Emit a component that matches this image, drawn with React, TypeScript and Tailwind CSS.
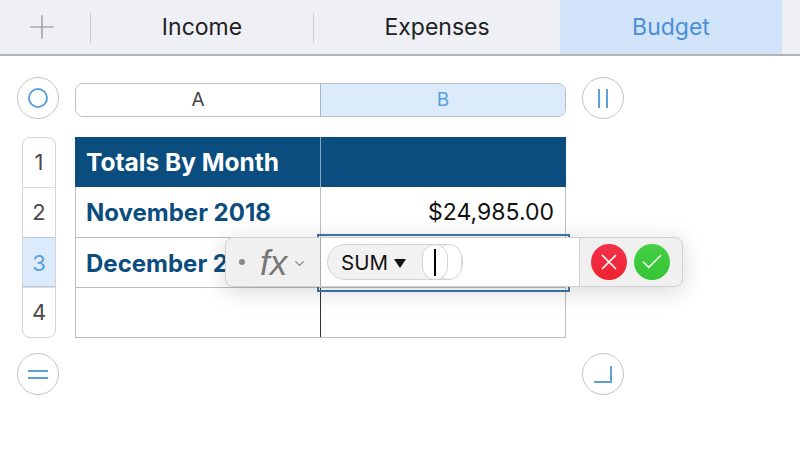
import { Check, ChevronDown, Plus, X } from "lucide-react";

const font = "font-['Inter','Liberation_Sans',sans-serif]";

function RoundButton({ children }: { children: React.ReactNode }) {
  return (
    <div className="flex h-[42px] w-[42px] shrink-0 items-center justify-center rounded-full border border-[#c4c4c4] bg-white">
      {children}
    </div>
  );
}

const rowNumbers = ["1", "2", "3", "4"];

export default function App() {
  return (
    <div className={`${font} h-[464px] w-[800px] overflow-hidden bg-white`}>
      <header className="flex h-[56px] border-b-2 border-[#b3b3b8] bg-[#eef0f5] text-[23px] text-[#222]">
        <div className="flex w-[91px] items-center justify-end">
          <div className="mt-[2px] flex h-[30px] w-[62px] items-center border-r border-[#c9cacd]">
            <Plus className="ml-[-6px] mt-[-2px] shrink-0 text-[#a9a9a9]" size={38} strokeWidth={1.1} />
          </div>
        </div>
        <div className="flex w-[222px] items-center justify-center pt-[1px]">Income</div>
        <div className="flex items-center">
          <div className="mt-[2px] h-[30px] w-px bg-[#c9cacd]" />
        </div>
        <div className="flex w-[246px] items-center justify-center pt-[1px]">Expenses</div>
        <div className="flex w-[222px] items-center justify-center bg-[#d2e4fa] pt-[1px] text-[#4a8fd8]">
          Budget
        </div>
      </header>

      <div className="relative pt-[21px]">
        <div className="flex h-[42px] items-center pl-[17px]">
          <RoundButton>
            <div className="h-[20px] w-[20px] rounded-full border-2 border-[#5ba2dd]" />
          </RoundButton>
          <div className="ml-[16px] mt-[4px] flex h-[34px] w-[491px] overflow-hidden rounded-[8px] border border-[#b9bfc6] text-[19px]">
            <div className="flex w-[244px] items-center justify-center bg-white text-[#444]">A</div>
            <div className="flex flex-1 items-center justify-center border-l border-[#a5b5c8] bg-[#dcebfc] text-[#5a9fe0]">
              B
            </div>
          </div>
          <div className="ml-[16px]">
            <RoundButton>
              <div className="flex gap-[6px]">
                <div className="h-[19px] w-[2px] bg-[#5f9fd4]" />
                <div className="h-[19px] w-[2px] bg-[#5f9fd4]" />
              </div>
            </RoundButton>
          </div>
        </div>

        <div className="mt-[18px] flex">
          <div className="ml-[22px] flex h-[201px] w-[34px] flex-col overflow-hidden rounded-[8px] border border-[#d4d4d4] text-[22px] text-[#4a4a4a]">
            {rowNumbers.map((n) => (
              <div
                key={n}
                className={
                  n === "3"
                    ? "flex h-[50px] items-center justify-center border-y border-[#bcc9d8] bg-[#dcebfc] pt-[2px] text-[#5a9fe0]"
                    : "flex h-[50px] flex-1 items-center justify-center border-t border-[#dcdcdc] first:border-t-0"
                }
              >
                {n}
              </div>
            ))}
          </div>

          <div className="ml-[19px] w-[491px] text-[#0b4d7e]">
            <div className="flex h-[50px] items-center bg-[#0b4d7e] text-[24.5px] font-bold text-white">
              <div className="w-[245px] whitespace-nowrap pl-[11px] pt-[1px]">Totals By Month</div>
              <div className="h-full w-px bg-[#8aa8c0]" />
            </div>
            <div className="flex h-[51px] border-x border-b border-[#bdbdbd] text-[24px] font-bold">
              <div className="flex w-[244px] items-center whitespace-nowrap pl-[10px] pt-[1px]">November 2018</div>
              <div className="flex flex-1 items-center justify-end border-l border-[#bdbdbd] pr-[11px] pt-[1px] text-[23px] font-normal text-[#111]">
                $24,985.00
              </div>
            </div>
            <div className="flex h-[50px] border-x border-b border-[#bdbdbd] text-[24px] font-bold">
              <div className="flex w-[244px] items-center whitespace-nowrap pl-[10px] pt-[2px]">December 2018</div>
              <div className="flex-1 border-l border-[#bdbdbd]" />
            </div>
            <div className="flex h-[50px] border-x border-b border-[#bdbdbd]">
              <div className="w-[244px]" />
              <div className="flex-1 border-l border-[#333]" />
            </div>
          </div>
        </div>

        <div className="mt-[15px] flex pl-[17px]">
          <RoundButton>
            <div className="flex flex-col gap-[5px]">
              <div className="h-[2px] w-[20px] bg-[#5f9fd4]" />
              <div className="h-[2px] w-[20px] bg-[#5f9fd4]" />
            </div>
          </RoundButton>
          <div className="ml-[523px]">
            <RoundButton>
              <div className="h-[17px] w-[18px] border-b-2 border-r-2 border-[#5f9fd4]" />
            </RoundButton>
          </div>
        </div>

        {/* selected cell outline, sits under the floating formula bar */}
        <div className="absolute left-[317px] top-[178px] h-[58px] w-[253px] border-2 border-[#3f77ac]" />

        {/* floating formula bar */}
        <div className="absolute left-[225px] top-[181px] flex h-[50px] w-[458px] overflow-hidden rounded-[8px] border border-[#d0d0d0] bg-[#f0f0f0] shadow-[0_4px_24px_rgba(0,0,0,0.16)]">
          <div className="flex w-[95px] items-center border-r border-[#a9a9a9] pl-[13px] text-[#777]">
            <div className="h-[6px] w-[6px] rounded-full bg-[#8a8a8a]" />
            <span className="ml-[15px] font-['Liberation_Sans',sans-serif] text-[35px] italic leading-none">
              fx
            </span>
            <ChevronDown className="ml-[5px] mt-[2px] text-[#888]" size={15} strokeWidth={2.2} />
          </div>
          <div className="flex w-[258px] items-center bg-white pl-[6px]">
            <div className="relative flex h-[36px] w-[136px] items-center rounded-full border border-[#d4d4d4] bg-[#f2f2f2] pl-[13px] text-[20.5px] text-[#111]">
              <span className="pt-[2px]">SUM</span>
              <div className="ml-[6px] mt-[2px] h-0 w-0 border-x-[6.5px] border-t-[9px] border-x-transparent border-t-[#111]" />
              <div className="absolute right-0 top-[-1px] h-[36px] w-[26px] rounded-full border border-[#d4d4d4] bg-white" />
              <div className="absolute left-[94px] top-[-1px] flex h-[36px] w-[26px] items-center justify-center rounded-full border border-[#d4d4d4] bg-white">
                <div className="h-[27px] w-[2px] bg-black" />
              </div>
            </div>
          </div>
          <div className="flex flex-1 items-center gap-[7px] border-l border-[#d4d4d4] pl-[11px]">
            <div className="flex h-[36px] w-[36px] items-center justify-center rounded-full bg-gradient-to-b from-[#f0304a] to-[#f0222e] text-white">
              <X size={26} strokeWidth={1.6} />
            </div>
            <div className="flex h-[36px] w-[36px] items-center justify-center rounded-full bg-gradient-to-b from-[#45cf45] to-[#34c534] text-[#e8f8e8]">
              <Check size={26} strokeWidth={1.5} />
            </div>
          </div>
        </div>
      </div>
    </div>
  );
}
